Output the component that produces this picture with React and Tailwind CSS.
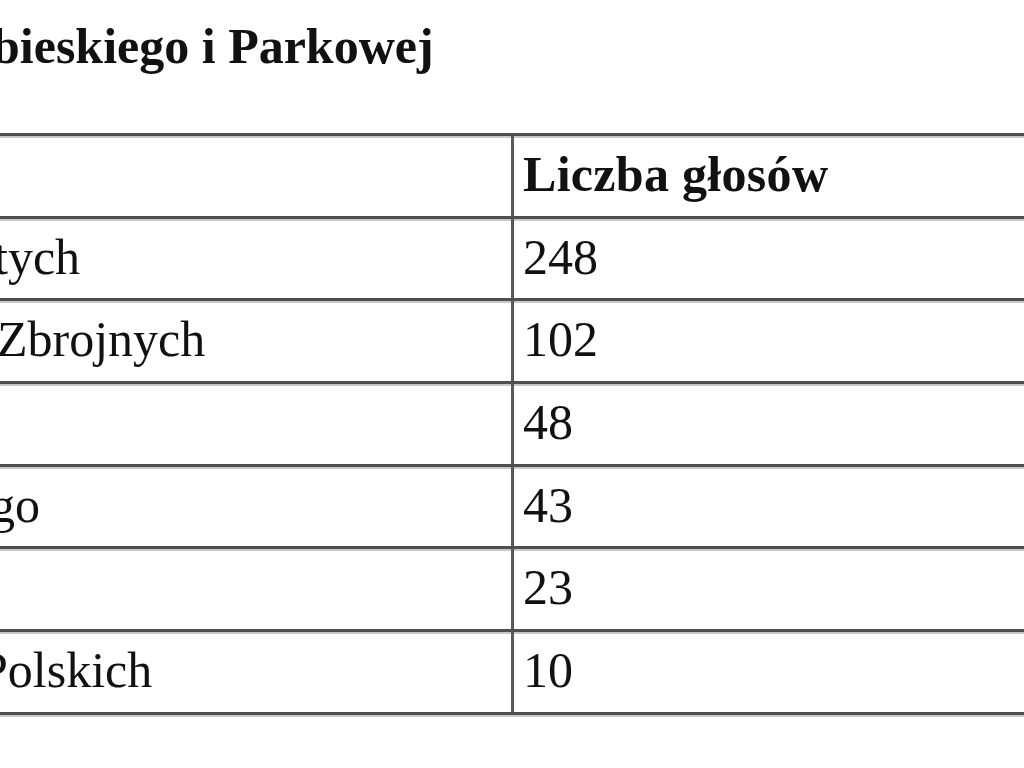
const rows = [
  {name: 'tych', shift: 'ml-[-6px]', votes: '248'},
  {name: 'Zbrojnych', shift: 'ml-[-3px]', votes: '102'},
  {name: '', shift: '', votes: '48'},
  {name: 'go', shift: 'ml-[-10px]', votes: '43'},
  {name: '', shift: '', votes: '23'},
  {name: 'Polskich', shift: 'ml-[-20px]', votes: '10'},
]

const line = 'border-b-[3px] border-[#4f4f4f] shadow-[0_2px_0_#c9c9c9]'

export default function App() {
  return (
    <div className="w-[1024px] h-[768px] overflow-hidden bg-white text-[#111] font-['Liberation_Serif','Times_New_Roman',serif]">
      <div className="pt-[21px] h-[133px]">
        <h2 className="ml-[-8px] text-[50px] leading-[50px] font-bold whitespace-nowrap">bieskiego i Parkowej</h2>
      </div>

      <div className="border-t-[3px] border-[#4f4f4f] shadow-[inset_0_2px_0_#c9c9c9]">
        <div className={`grid grid-cols-[514px_1fr] ${line}`}>
          <div className="h-[79.7px] border-r-[3px] border-[#5a5a5a]"/>
          <div className="h-[79.7px] pl-[9px] pt-[13px] text-[50px] leading-[50px] font-bold whitespace-nowrap tracking-[0.3px]">Liczba głosów</div>
        </div>
        {rows.map(r => (
          <div key={r.votes} className={`grid grid-cols-[514px_1fr] ${line}`}>
            <div className="h-[79.7px] border-r-[3px] border-[#5a5a5a] pt-[13px] text-[50px] leading-[50px] whitespace-nowrap overflow-hidden">
              <span className={`block ${r.shift}`}>{r.name}</span>
            </div>
            <div className="h-[79.7px] pl-[9px] pt-[13px] text-[50px] leading-[50px]">{r.votes}</div>
          </div>
        ))}
      </div>
    </div>
  )
}
